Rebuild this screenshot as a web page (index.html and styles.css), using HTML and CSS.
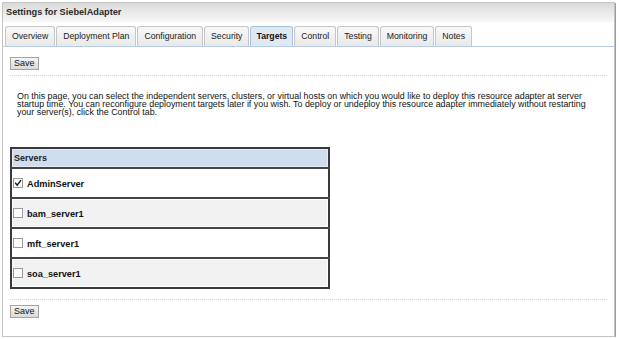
FILE: index.html
```html
<!DOCTYPE html>
<html>
<head>
<meta charset="utf-8">
<title>Settings for SiebelAdapter</title>
<link rel="stylesheet" href="styles.css">
</head>
<body>
<div class="frame">
  <div class="titlebar">Settings for SiebelAdapter</div>
  <div class="tabs">
    <div class="tab">Overview</div>
    <div class="tab">Deployment Plan</div>
    <div class="tab">Configuration</div>
    <div class="tab">Security</div>
    <div class="tab active">Targets</div>
    <div class="tab">Control</div>
    <div class="tab">Testing</div>
    <div class="tab">Monitoring</div>
    <div class="tab">Notes</div>
  </div>
  <div class="content">
    <div class="btnrow"><button class="btn">Save</button></div>
    <div class="sep"></div>
    <p class="intro">On this page, you can select the independent servers, clusters, or virtual hosts on which you would like to deploy this resource adapter at server startup time. You can reconfigure deployment targets later if you wish. To deploy or undeploy this resource adapter immediately without restarting your server(s), click the Control tab.</p>
    <table class="servers">
      <thead>
        <tr><th>Servers</th></tr>
      </thead>
      <tbody>
        <tr><td><span class="cb"><svg viewBox="0 0 10 10" width="10" height="10"><path d="M2.2 4.8 L4.2 7.2 L8 2.2" fill="none" stroke="#111" stroke-width="1.4"/></svg></span>AdminServer</td></tr>
        <tr class="alt"><td><span class="cb"></span>bam_server1</td></tr>
        <tr><td><span class="cb"></span>mft_server1</td></tr>
        <tr class="alt"><td><span class="cb"></span>soa_server1</td></tr>
      </tbody>
    </table>
    <div class="sep sep-bottom"></div>
    <div class="btnrow"><button class="btn">Save</button></div>
  </div>
</div>
</body>
</html>
```
FILE: styles.css
```css
html, body {
  margin: 0;
  padding: 0;
  background: #ffffff;
}
body {
  font-family: "Liberation Sans", Arial, sans-serif;
  color: #1a1a1a;
}
.frame {
  box-sizing: border-box;
  margin: 2px 0 0 2px;
  width: 613px;
  height: 335px;
  border: 1px solid #c4c4c4;
  box-shadow: 1px 1px 0 #9a9a9a;
  background: #fff;
}
.titlebar {
  height: 19px;
  line-height: 19px;
  padding-left: 3px;
  font-weight: bold;
  font-size: 9.2px;
  color: #2b2b2b;
  background: linear-gradient(#dadada, #f8f8f8);
}
.tabs {
  display: flex;
  gap: 1px;
  margin-top: 4px;
  padding-left: 2px;
  border-bottom: 1px solid #b8cde3;
}
.tab {
  height: 19px;
  line-height: 19px;
  padding: 0 6px;
  border: 1px solid #c6c6c6;
  border-bottom: none;
  border-radius: 3px 3px 0 0;
  background: linear-gradient(#f8f8f8, #e9e9e9);
  font-size: 8.7px;
  color: #1a1a1a;
  white-space: nowrap;
}
.tab.active {
  padding: 0 5px;
  font-weight: bold;
  font-size: 8.7px;
  color: #111;
  background: #dfe9f4;
  border-color: #a9c1dd;
}
.content {
  padding: 0 7px 0 7px;
}
.btnrow {
  display: flex;
}
.btn {
  margin: 10px 0 0 0;
  box-sizing: border-box;
  height: 13px;
  padding: 0 3px;
  font-family: "Liberation Sans", Arial, sans-serif;
  font-size: 9px;
  line-height: 11px;
  color: #111;
  background: linear-gradient(#f6f6f6, #dadada);
  border: 1px solid #a4a4a4;
  border-radius: 0;
}
.sep {
  margin-top: 5px;
  border-top: 1px dotted #d6d6d6;
}
.sep-bottom {
  margin-top: 10px;
}
.sep + .btnrow .btn {
  margin-top: 5px;
}
.intro {
  margin: 16px 0 0 7px;
  padding-right: 2px;
  font-size: 8.9px;
  line-height: 8px;
  color: #111;
}
.servers {
  margin-top: 31px;
  width: 320px;
  border-collapse: collapse;
  border: 2px solid #3a3a3a;
}
.servers th {
  height: 18px;
  padding: 0 0 0 2px;
  text-align: left;
  font-size: 9px;
  font-weight: bold;
  color: #222;
  background: #d0ddef;
  box-shadow: inset 0 0 0 1px #e4ecf6;
}
.servers td {
  height: 28px;
  padding: 0 0 0 1px;
  border-top: 2px solid #454545;
  font-size: 9.2px;
  font-weight: bold;
  color: #111;
  background: #fff;
  box-shadow: inset 0 0 0 1px #ffffff;
}
.servers tr.alt td {
  background: #f2f2f2;
}
.cb {
  display: inline-block;
  box-sizing: border-box;
  width: 10px;
  height: 10px;
  margin-right: 4px;
  vertical-align: -1px;
  border: 1px solid #9a9a9a;
  background: #fff;
  position: relative;
}
.cb svg {
  position: absolute;
  left: -1px;
  top: -1px;
}
```
